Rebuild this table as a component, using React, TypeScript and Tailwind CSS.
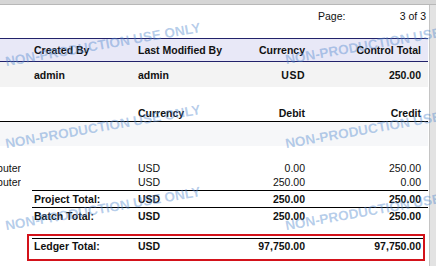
export default function App() {
  const grid = "grid grid-cols-[104px_104px_63px_116px]";
  return (
    <div className="relative w-[436px] h-[266px] overflow-hidden bg-[#e3e3e3] font-['Liberation_Sans',Arial,sans-serif] text-[10.5px] leading-[14px] text-[#111]">
      <div className="h-[5px] bg-[#d6d6d6] border-b border-[#b8b8b8]" />
      <div className="flex h-[261px]">
        <div className="w-[429px] bg-white flex flex-col">
          {/* Page row */}
          <div className="h-[22px] flex items-center pl-[318px] pr-[3px]">
            <span className="flex-1">Page:</span>
            <span>3 of 3</span>
          </div>
          {/* Header band */}
          <div className={`mt-[11px] w-[428px] h-[24px] border-y border-[#22226a] bg-[#e8e8f7] pl-[34px] items-center font-bold ${grid}`}>
            <span>Created By</span>
            <span className="whitespace-nowrap">Last Modified By</span>
            <span className="text-right">Currency</span>
            <span className="text-right">Control Total</span>
          </div>
          {/* Data band */}
          <div className={`w-[428px] h-[25px] bg-[#f3f3f3] pl-[34px] items-center font-bold ${grid}`}>
            <span>admin</span>
            <span>admin</span>
            <span className="text-right tracking-[0.5px]">USD</span>
            <span className="text-right">250.00</span>
          </div>
          {/* Second header */}
          <div className={`w-[428px] h-[35px] border-b border-black pl-[34px] pb-[1px] content-end font-bold ${grid}`}>
            <span />
            <span>Currency</span>
            <span className="text-right">Debit</span>
            <span className="text-right">Credit</span>
          </div>
          <div className="w-[428px] h-[24px] bg-[#f6f7f9]" />
          <div className="h-[15px]" />
          {/* Detail rows */}
          {[
            ["0.00", "250.00"],
            ["250.00", "0.00"],
          ].map(([d, c], i) => (
            <div key={i} className="h-[14px] flex items-center">
              <div className="w-[21px] overflow-hidden flex justify-end">
                <span className="shrink-0 whitespace-nowrap">Computer</span>
              </div>
              <div className={`ml-[13px] ${grid}`}>
                <span />
                <span>USD</span>
                <span className="text-right">{d}</span>
                <span className="text-right">{c}</span>
              </div>
            </div>
          ))}
          {/* Project total */}
          <div className={`mt-[1px] ml-[32px] w-[396px] h-[17px] border-t border-black pl-[2px] items-center font-bold ${grid}`}>
            <span className="whitespace-nowrap">Project Total:</span>
            <span>USD</span>
            <span className="text-right">250.00</span>
            <span className="text-right">250.00</span>
          </div>
          <div className={`ml-[32px] w-[396px] h-[16px] border-t border-black pl-[2px] items-center font-bold ${grid}`}>
            <span className="whitespace-nowrap">Batch Total:</span>
            <span>USD</span>
            <span className="text-right">250.00</span>
            <span className="text-right">250.00</span>
          </div>
          {/* Ledger total */}
          <div className="mt-[11px] ml-[27px] w-[398px] h-[27px] border-2 border-[#d3121a] pt-[2px]">
            <div className={`ml-[3px] h-[15px] border-t border-black pl-[2px] items-center font-bold ${grid}`}>
              <span className="whitespace-nowrap">Ledger Total:</span>
              <span>USD</span>
              <span className="text-right">97,750.00</span>
              <span className="text-right">97,750.00</span>
            </div>
          </div>
        </div>
        <div className="flex-1 border-l border-[#c4c4c4] bg-[#e3e3e3]" />
      </div>

      {/* Watermarks */}
      <div className="pointer-events-none absolute inset-0 text-[13.6px] leading-none font-bold text-[rgba(80,135,205,0.42)] whitespace-nowrap">
        <span className="absolute left-[103px] top-[45px] -translate-x-1/2 -translate-y-1/2 rotate-[-10deg]">NON-PRODUCTION USE ONLY</span>
        <span className="absolute left-[103px] top-[127px] -translate-x-1/2 -translate-y-1/2 rotate-[-10deg]">NON-PRODUCTION USE ONLY</span>
        <span className="absolute left-[103px] top-[209px] -translate-x-1/2 -translate-y-1/2 rotate-[-10deg]">NON-PRODUCTION USE ONLY</span>
        <span className="absolute left-[103px] top-[291px] -translate-x-1/2 -translate-y-1/2 rotate-[-10deg]">NON-PRODUCTION USE ONLY</span>
        <span className="absolute left-[383px] top-[43px] -translate-x-1/2 -translate-y-1/2 rotate-[-10deg]">NON-PRODUCTION USE ONLY</span>
        <span className="absolute left-[383px] top-[127px] -translate-x-1/2 -translate-y-1/2 rotate-[-10deg]">NON-PRODUCTION USE ONLY</span>
        <span className="absolute left-[383px] top-[209px] -translate-x-1/2 -translate-y-1/2 rotate-[-10deg]">NON-PRODUCTION USE ONLY</span>
      </div>
    </div>
  );
}
